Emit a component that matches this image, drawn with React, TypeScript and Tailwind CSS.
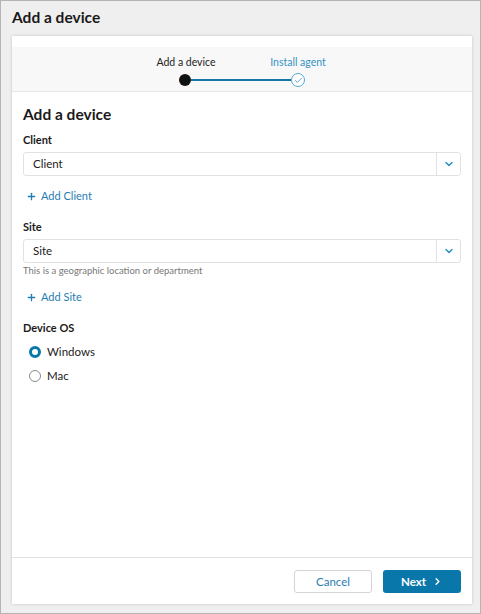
import { Check, ChevronDown, ChevronRight, Plus } from 'lucide-react';

function SelectBox({ placeholder }: { placeholder: string }) {
  return (
    <div className="flex h-[24px] w-full items-stretch rounded-[3px] border border-[#e2e2e2] bg-white">
      <div className="flex flex-1 items-center pl-[9px] text-[11.5px] text-[#222]">{placeholder}</div>
      <div className="flex w-[24px] items-center justify-center border-l border-[#e2e2e2]">
        <ChevronDown size={12} strokeWidth={3} className="text-[#2f8fc4]" />
      </div>
    </div>
  );
}

function AddLink({ label }: { label: string }) {
  return (
    <div className="flex h-[18px] items-center gap-[4px] pl-[3px] text-[11px] text-[#1f7db3]">
      <Plus size={11} strokeWidth={2.75} />
      <span>{label}</span>
    </div>
  );
}

function Radio({ label, checked }: { label: string; checked?: boolean }) {
  return (
    <div className="flex h-[24px] items-center gap-[6px] pl-[6px] text-[11.5px] text-[#222]">
      {checked ? (
        <span className="h-[12px] w-[12px] rounded-full border-[3.5px] border-[#0a77ab] bg-white" />
      ) : (
        <span className="h-[12px] w-[12px] rounded-full border border-[#8a8a8a] bg-white" />
      )}
      <span>{label}</span>
    </div>
  );
}

export default function App() {
  return (
    <div
      className="flex h-[614px] w-[481px] flex-col border border-[#b4b4b4] bg-[#efefef] pl-[11px] pr-[8px] pb-[9px]"
      style={{ fontFamily: 'Lato, "Open Sans", sans-serif' }}
    >
      <div className="flex h-[35px] items-center pb-[2px] text-[15.5px] font-bold text-[#1a1a1a]">Add a device</div>

      <div className="flex flex-1 flex-col bg-white shadow-[0_0_3px_rgba(0,0,0,0.18)]">
        <div className="h-[11px]" />
        <div className="flex h-[45px] justify-center border-b border-[#e6e6e6] bg-[#f8f8f8]">
          <div className="flex flex-col items-center pt-[7px]">
            <div className="flex w-[172px] justify-between whitespace-nowrap text-[10.5px] leading-[16px]">
              <span className="w-[60px] text-center text-[#222]">Add a device</span>
              <span className="w-[60px] text-center text-[#3592c4]">Install agent</span>
            </div>
            <div className="mt-[3px] flex w-[126px] items-center">
              <span className="h-[12px] w-[12px] rounded-full bg-[#111]" />
              <span className="h-[2px] flex-1 bg-[#1576a8]" />
              <span className="flex h-[14px] w-[14px] items-center justify-center rounded-full border border-[#5aa6cf] bg-white">
                <Check size={9} strokeWidth={2.5} className="text-[#5aa6cf]" />
              </span>
            </div>
          </div>
        </div>

        <div className="flex flex-1 flex-col px-[11px] pt-[11px]">
          <h2 className="text-[15.5px] font-bold leading-[22px] text-[#1a1a1a]">Add a device</h2>
          <label className="mt-[7px] text-[11px] font-bold leading-[16px] text-[#1a1a1a]">Client</label>
          <div className="mt-[4px]">
            <SelectBox placeholder="Client" />
          </div>
          <div className="mt-[11px]">
            <AddLink label="Add Client" />
          </div>

          <label className="mt-[14px] text-[11px] font-bold leading-[16px] text-[#1a1a1a]">Site</label>
          <div className="mt-[4px]">
            <SelectBox placeholder="Site" />
          </div>
          <p className="mt-[1px] text-[9.5px] leading-[14px] text-[#777]">This is a geographic location or department</p>
          <div className="mt-[10px]">
            <AddLink label="Add Site" />
          </div>

          <label className="mt-[14px] text-[11px] font-bold leading-[16px] text-[#1a1a1a]">Device OS</label>
          <div className="mt-[4px] flex flex-col">
            <Radio label="Windows" checked />
            <Radio label="Mac" />
          </div>
        </div>

        <div className="flex h-[47px] items-center justify-end gap-[11px] border-t border-[#e2e2e2] pr-[11px] pt-[1px]">
          <button className="h-[23px] w-[78px] rounded-[3px] border border-[#d4d4d4] bg-white text-[11.5px] text-[#1f7db3]">
            Cancel
          </button>
          <button className="flex h-[23px] w-[78px] items-center justify-center gap-[6px] rounded-[3px] bg-[#0a77ab] text-[11.5px] font-bold text-white">
            Next
            <ChevronRight size={11} strokeWidth={3} />
          </button>
        </div>
      </div>
    </div>
  );
}
